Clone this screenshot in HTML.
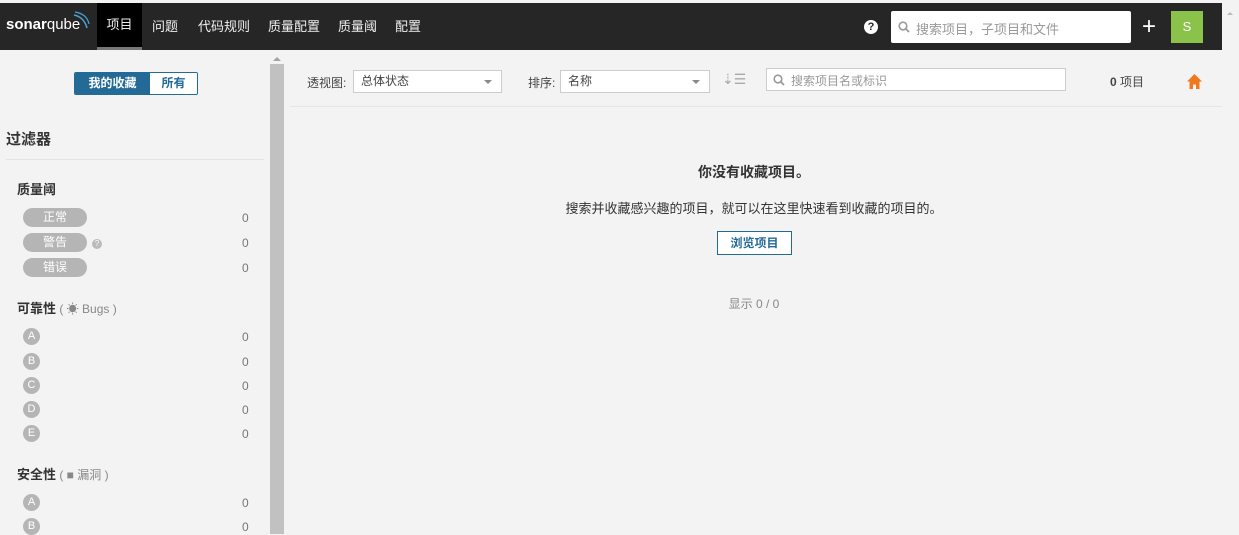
<!DOCTYPE html>
<html><head><meta charset="utf-8">
<style>
*{box-sizing:border-box;margin:0;padding:0}
body{width:1239px;height:532px;overflow:hidden;background:#f3f3f3;font-family:"Liberation Sans","Noto Sans CJK SC",sans-serif;color:#444;font-size:13px;position:relative}
.abs{position:absolute}
.top{left:0;top:3px;width:1222px;height:47px;background:#262626}
.nav{top:3px;height:47px;line-height:47px;color:#eee;font-size:13px}
.cur{background:#000;border-bottom:3px solid #777;line-height:44px}
.cnt{color:#777;font-size:12px;left:242px}
.pill{left:23px;width:64px;height:19px;border-radius:10px;background:#b5b5b5;color:#fff;text-align:center;font-size:12px;line-height:19px}
.circ{left:23px;width:17px;height:17px;border-radius:50%;background:#b5b5b5;color:#fff;font-size:11px;text-align:center;line-height:17px}
.h{font-weight:bold;font-size:13px;color:#333}
.sel{height:23px;background:#fff;border:1px solid #ccc;font-size:12px;line-height:21px;padding-left:7px}
.sel:after{content:"";position:absolute;right:9px;top:9px;border:4px solid transparent;border-top:4px solid #888}
</style></head><body>
<div class="abs top"></div>
<div class="abs" style="left:6px;top:13px;color:#fff;font-size:15px;line-height:24px"><b>sonar</b>qube</div>
<svg class="abs" style="left:72px;top:11px" width="18" height="20"><path d="M2 4 Q12 6 15 17" stroke="#4b9fd5" stroke-width="1.5" fill="none"/><path d="M3 1 Q15 3 17 13" stroke="#4b9fd5" stroke-width="1.2" fill="none"/></svg>
<div class="abs nav cur" style="left:97px;width:45px;text-align:center">项目</div>
<div class="abs nav" style="left:152px">问题</div>
<div class="abs nav" style="left:198px">代码规则</div>
<div class="abs nav" style="left:268px">质量配置</div>
<div class="abs nav" style="left:338px">质量阈</div>
<div class="abs nav" style="left:395px">配置</div>
<div class="abs" style="left:864px;top:20px;width:14px;height:14px;border-radius:50%;background:#fff;color:#262626;font-size:11px;font-weight:bold;text-align:center;line-height:14px">?</div>
<div class="abs" style="left:891px;top:11px;width:240px;height:32px;background:#fff;border-radius:2px"></div>
<svg class="abs" style="left:898px;top:21px" width="12" height="12"><circle cx="5" cy="5" r="3.8" stroke="#999" stroke-width="1.6" fill="none"/><path d="M8 8L11 11" stroke="#999" stroke-width="1.8"/></svg>
<div class="abs" style="left:916px;top:19px;font-size:13px;color:#999">搜索项目，子项目和文件</div>
<div class="abs" style="left:1142px;top:12px;color:#fff;font-size:24px;line-height:30px">+</div>
<div class="abs" style="left:1171px;top:11px;width:32px;height:32px;background:#8bc34a;color:#fff;text-align:center;line-height:32px;font-size:13px">S</div>
<!-- sidebar -->
<div class="abs" style="left:270px;top:64px;width:14px;height:470px;background:#c1c1c1"></div>
<div class="abs" style="left:273px;top:53px;border:4px solid transparent;border-bottom:4px solid #a3a3a3"></div>
<div class="abs" style="left:74px;top:72px;width:124px;height:23px;border:1px solid #236a97;border-radius:2px;overflow:hidden;display:flex;font-size:12px;font-weight:bold;line-height:21px">
<div style="width:75px;background:#236a97;color:#fff;text-align:center">我的收藏</div><div style="flex:1;background:#fff;color:#236a97;text-align:center">所有</div></div>
<div class="abs h" style="left:6px;top:128px;font-size:15px">过滤器</div>
<div class="abs" style="left:6px;top:159px;width:258px;height:1px;background:#e4e4e4"></div>
<div class="abs h" style="left:17px;top:179px">质量阈</div>
<div class="abs pill" style="top:208px">正常</div><div class="abs cnt" style="top:211px">0</div>
<div class="abs pill" style="top:233px">警告</div><div class="abs" style="left:92px;top:239px;width:10px;height:10px;border-radius:50%;background:#bbb;color:#fff;font-size:8px;text-align:center;line-height:10px">?</div><div class="abs cnt" style="top:236px">0</div>
<div class="abs pill" style="top:258px">错误</div><div class="abs cnt" style="top:261px">0</div>
<div class="abs h" style="left:17px;top:298px">可靠性<span style="font-weight:normal;color:#888;font-size:12px"> ( ☀ Bugs )</span></div>
<div class="abs circ" style="top:328px">A</div><div class="abs cnt" style="top:330px">0</div>
<div class="abs circ" style="top:353px">B</div><div class="abs cnt" style="top:355px">0</div>
<div class="abs circ" style="top:377px">C</div><div class="abs cnt" style="top:379px">0</div>
<div class="abs circ" style="top:401px">D</div><div class="abs cnt" style="top:403px">0</div>
<div class="abs circ" style="top:425px">E</div><div class="abs cnt" style="top:427px">0</div>
<div class="abs h" style="left:17px;top:464px">安全性<span style="font-weight:normal;color:#888;font-size:12px"> ( ■ 漏洞 )</span></div>
<div class="abs circ" style="top:494px">A</div><div class="abs cnt" style="top:496px">0</div>
<div class="abs circ" style="top:518px">B</div><div class="abs cnt" style="top:520px">0</div>
<!-- main -->
<div class="abs" style="left:307px;top:74px;font-size:12px">透视图:</div>
<div class="abs sel" style="left:353px;top:70px;width:149px">总体状态</div>
<div class="abs" style="left:528px;top:74px;font-size:12px">排序:</div>
<div class="abs sel" style="left:560px;top:70px;width:150px">名称</div>
<div class="abs" style="left:722px;top:71px;color:#aaa;font-size:14px">⇣☰</div>
<div class="abs" style="left:766px;top:68px;width:300px;height:23px;background:#fff;border:1px solid #ccc"></div>
<svg class="abs" style="left:773px;top:74px" width="12" height="12"><circle cx="5" cy="5" r="3.8" stroke="#999" stroke-width="1.6" fill="none"/><path d="M8 8L11 11" stroke="#999" stroke-width="1.8"/></svg>
<div class="abs" style="left:791px;top:72px;font-size:12px;color:#999">搜索项目名或标识</div>
<div class="abs" style="left:1110px;top:73px;font-size:12px;color:#444"><b>0</b> 项目</div>
<svg class="abs" style="left:1186px;top:73px" width="17" height="17"><path d="M8.5 1L1 8.5H3.5V16H7V11.5H10V16H13.5V8.5H16Z" fill="#f0781e"/></svg>
<div class="abs" style="left:290px;top:106px;width:932px;height:1px;background:#e6e6e6"></div>
<div class="abs h" style="left:0;width:1508px;top:162px;text-align:center;font-size:14px">你没有收藏项目。</div>
<div class="abs" style="left:0;width:1508px;top:198px;text-align:center;font-size:13px;color:#333">搜索并收藏感兴趣的项目，就可以在这里快速看到收藏的项目的。</div>
<div class="abs" style="left:717px;top:231px;width:75px;height:24px;border:1px solid #236a97;background:#fff;color:#236a97;font-weight:bold;font-size:12px;text-align:center;line-height:22px">浏览项目</div>
<div class="abs" style="left:0;width:1508px;top:295px;text-align:center;font-size:12px;color:#888">显示 0 / 0</div>
<div class="abs" style="left:1227px;top:9px;border:3px solid transparent;border-bottom:3px solid #bbb"></div>
</body></html>
